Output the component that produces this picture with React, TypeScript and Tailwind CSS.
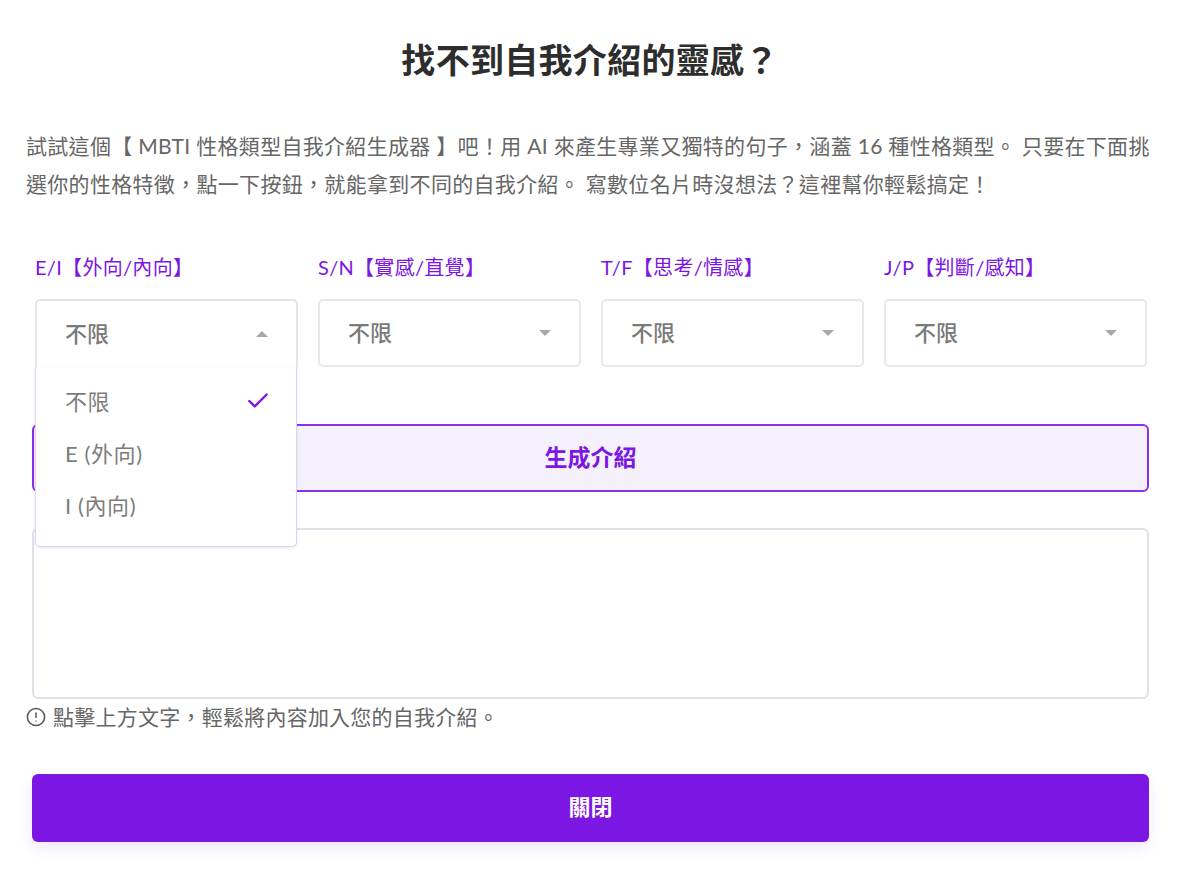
import { Check } from 'lucide-react';

const selects = [
  { label: 'E/I【外向/內向】', open: true },
  { label: 'S/N【實感/直覺】', open: false },
  { label: 'T/F【思考/情感】', open: false },
  { label: 'J/P【判斷/感知】', open: false },
];

const options = ['不限', 'E (外向)', 'I (內向)'];

const Caret = ({ up }: { up: boolean }) => (
  <svg width="12" height="6" viewBox="0 0 12 6" className="fill-[#a8a8a8]">
    {up ? <path d="M6 0l6 6H0z" /> : <path d="M6 6L0 0h12z" />}
  </svg>
);

const Select = ({ label, open }: { label: string; open: boolean }) => (
  <div className="relative w-[263px]">
    <div className="mb-[15px] h-[34px] text-[20px] leading-[34px] tracking-[0.3px] text-[#7b16e3]">{label}</div>
    <div className={open
      ? 'flex h-[68px] items-center justify-between rounded-t-[5px] border-2 border-b-0 border-[#e6e3ee] bg-white pl-[28px] pr-[28px]'
      : 'flex h-[68px] items-center justify-between rounded-[5px] border-2 border-[#e8e8ec] bg-white pl-[28px] pr-[28px]'}>
      <span className="pb-[2px] text-[22px] font-medium text-[#7a7a7a]">不限</span>
      <Caret up={open} />
    </div>
    {open && (
      <div className="absolute left-0 top-[117px] z-10 h-[180px] w-[262px] rounded-b-[5px] border border-t-0 border-[#dcd6ec] bg-white pt-[8px] shadow-[0_1px_3px_rgba(80,60,140,0.12)]">
        {options.map((option, i) => (
          <div key={option} className="flex h-[52px] items-center justify-between pl-[29px] pr-[25px] text-[22px] tracking-[0.6px] text-[#7d7d7d]">
            <span>{option}</span>
            {i === 0 && <Check size={26} strokeWidth={2.2} className="text-[#7b16e3]" />}
          </div>
        ))}
      </div>
    )}
  </div>
);

export default function App() {
  return (
    <div className="h-[875px] w-[1200px] overflow-hidden bg-white font-['Lato','Noto_Sans_CJK_TC',sans-serif]">
      <h1 className="pr-[20px] pt-[35px] text-center text-[34px] font-bold leading-[50px] tracking-[0.3px] text-[#2d2d2d]">找不到自我介紹的靈感？</h1>
      <p className="mt-[42px] w-[1160px] pl-[26px] text-[21px] leading-[38px] tracking-[0.31px] text-[#666666]">
        試試這個【 MBTI 性格類型自我介紹生成器 】吧！用 AI 來產生專業又獨特的句子，涵蓋 16 種性格類型。 只要在下面挑選你的性格特徵，點一下按鈕，就能拿到不同的自我介紹。 寫數位名片時沒想法？這裡幫你輕鬆搞定！
      </p>
      <div className="mt-[47px] flex gap-[20px] pl-[35px]">
        {selects.map((s) => (
          <Select key={s.label} label={s.label} open={s.open} />
        ))}
      </div>
      <div className="px-[32px]">
        <button className="mt-[57px] flex h-[68px] w-[1117px] items-center justify-center rounded-[6px] border-2 border-[#8a30e8] bg-[#f4f0fc] pb-[2px] text-[23px] font-bold text-[#7b16e3]">
          生成介紹
        </button>
        <div className="mt-[36px] h-[171px] w-[1117px] rounded-[6px] border-2 border-[#e2dfea] bg-white" />
      </div>
      <div className="mt-[2px] flex h-[32px] items-center gap-[7px] pl-[26px] text-[21px] tracking-[0.24px] text-[#666666]">
        <svg width="20" height="20" viewBox="0 0 20 20" fill="none" stroke="#555" strokeWidth="1.5">
          <circle cx="10" cy="10" r="8.6" />
          <path d="M10 5.5v5.5M10 13.4v1" />
        </svg>
        <span>點擊上方文字，輕鬆將內容加入您的自我介紹。</span>
      </div>
      <div className="px-[32px]">
        <button className="mt-[41px] flex h-[68px] w-[1117px] items-center justify-center rounded-[6px] bg-[#7b16e3] pb-[3px] text-[22px] font-bold text-white shadow-[0_6px_14px_rgba(123,22,227,0.1)]">
          關閉
        </button>
      </div>
    </div>
  );
}
